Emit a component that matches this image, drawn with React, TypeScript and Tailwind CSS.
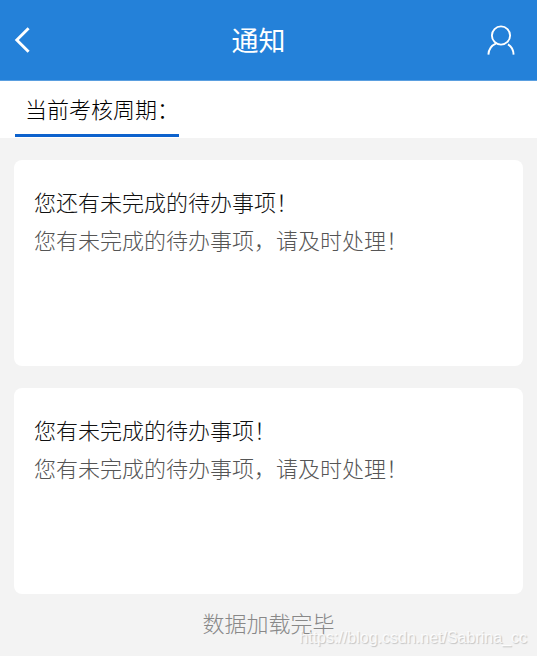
interface Notice {
  id: number;
  title: string;
  content: string;
}

const notices: Notice[] = [
  { id: 1, title: '您还有未完成的待办事项！', content: '您有未完成的待办事项，请及时处理！' },
  { id: 2, title: '您有未完成的待办事项！', content: '您有未完成的待办事项，请及时处理！' },
];

function Header() {
  return (
    <header className="flex h-[81px] items-center justify-between border-b border-[#5a9fe0] bg-[#2481d9] px-3.5 text-white">
      <button type="button" aria-label="返回" className="flex w-8 py-2">
        <svg viewBox="0 0 16 26" className="h-[26px] w-4" fill="none" stroke="currentColor">
          <path d="M14.6 1.2 2.8 13l11.8 11.8" strokeWidth="2.9" />
        </svg>
      </button>
      <h1 className="text-[27px] leading-9 font-normal">通知</h1>
      <button type="button" aria-label="个人中心" className="flex w-13 justify-end py-2 pr-2">
        <svg
          viewBox="0 0 28 30"
          className="h-[30px] w-7 shrink-0"
          fill="none"
          stroke="currentColor"
          strokeWidth="1.9"
        >
          <circle cx="14" cy="10.5" r="9.1" />
          <path d="M9.2 18.4C4.3 20.6 1.6 24.4 1.4 29.6" />
          <path d="M21 19.4c3.4 2 5.4 5.4 5.6 10.2" />
        </svg>
      </button>
    </header>
  );
}

function NoticeCard({ title, content }: Notice) {
  return (
    <li className="min-h-[206px] rounded-lg bg-white px-5 pt-[22px]">
      <h2 className="leading-[38px] text-[#111]">{title}</h2>
      <p className="leading-[38px] text-[#555]">{content}</p>
    </li>
  );
}

export default function App() {
  return (
    <div className="relative min-h-screen bg-[#f3f3f3] font-['Noto_Sans_CJK_SC',sans-serif] text-[22px] font-light">
      <Header />
      <nav className="flex h-[57px] bg-white px-[15px]">
        <a
          href="#period"
          className="h-14 border-b-3 border-[#0d62cd] pl-2.5 leading-[54px] text-black"
        >
          当前考核周期：
        </a>
      </nav>
      <main className="px-3.5 pt-[22px]">
        <ul className="flex flex-col gap-[22px]">
          {notices.map((notice) => (
            <NoticeCard key={notice.id} {...notice} />
          ))}
        </ul>
        <p className="pt-2.5 text-center leading-9 text-[#888]">数据加载完毕</p>
      </main>
      <span className="absolute right-2.5 bottom-1.5 font-['Liberation_Sans',sans-serif] text-base font-normal text-white/80 [text-shadow:1px_1px_1px_rgba(0,0,0,0.2)]">
        https://blog.csdn.net/Sabrina_cc
      </span>
    </div>
  );
}
